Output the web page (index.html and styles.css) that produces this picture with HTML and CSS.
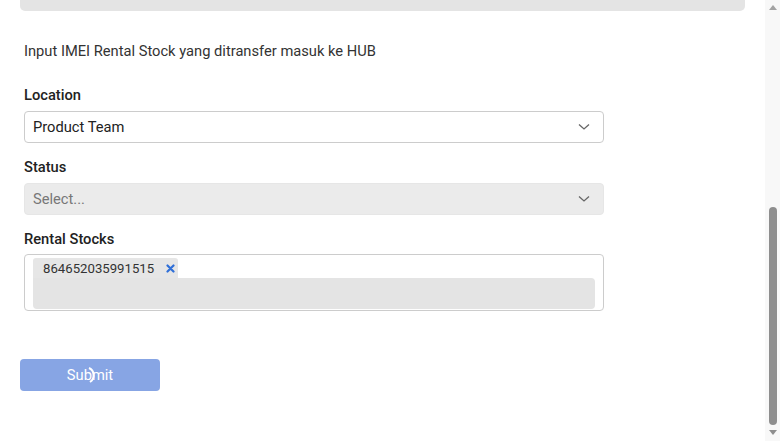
FILE: index.html
```html
<!DOCTYPE html>
<html>
<head>
<meta charset="utf-8">
<link rel="stylesheet" href="styles.css">
</head>
<body>
<div class="viewport">
  <div class="page">
    <div class="top-box"></div>
    <div class="form">
      <p class="intro">Input IMEI Rental Stock yang ditransfer masuk ke HUB</p>
      <div class="field">
        <label class="label">Location</label>
        <div class="select">
          <span class="value">Product Team</span>
          <svg class="chev" width="12" height="8" viewBox="0 0 12 8"><path d="M1 1.5 L6 6 L11 1.5" fill="none" stroke="#666" stroke-width="1.3"/></svg>
        </div>
      </div>
      <div class="field">
        <label class="label">Status</label>
        <div class="select disabled">
          <span class="placeholder">Select...</span>
          <svg class="chev" width="12" height="8" viewBox="0 0 12 8"><path d="M1 1.5 L6 6 L11 1.5" fill="none" stroke="#666" stroke-width="1.3"/></svg>
        </div>
      </div>
      <div class="field">
        <label class="label tight">Rental Stocks</label>
        <div class="multi">
          <div class="chip-row">
            <span class="chip">864652035991515 <svg class="x" width="9" height="9" viewBox="0 0 9 9"><path d="M1.5 1.5 L7.5 7.5 M7.5 1.5 L1.5 7.5" stroke="#2f6fd8" stroke-width="2.2" stroke-linecap="round"/></svg></span>
          </div>
          <div class="multi-input"></div>
        </div>
      </div>
      <button class="submit">Submit<svg class="spin" width="16" height="18" viewBox="0 0 16 18"><path d="M3 2 A8 8 0 0 1 4 16" fill="none" stroke="#fff" stroke-width="2"/></svg></button>
    </div>
  </div>
  <div class="scrollbar">
    <div class="arrow up"></div>
    <div class="track"><div class="thumb"></div></div>
    <div class="arrow down"></div>
  </div>
</div>
</body>
</html>
```

FILE: styles.css
```css
html, body {
  margin: 0;
  padding: 0;
  height: 100%;
  overflow: hidden;
  background: #fff;
  font-family: Roboto, "Liberation Sans", sans-serif;
  color: #333;
}
.viewport {
  display: flex;
  height: 441px;
}
.page {
  flex: 1;
  padding: 0 20px;
}
.top-box {
  height: 11px;
  background: #e4e4e4;
  border-radius: 0 0 5px 5px;
}
.form {
  padding: 0 0 0 4px;
}
.intro {
  margin: 32px 0 0;
  font-size: 14.7px;
  line-height: 17px;
}
.field {
  width: 580px;
}
.label {
  display: block;
  font-weight: 500;
  font-size: 14.7px;
  line-height: 16px;
  color: #222;
  margin-top: 27px;
  margin-bottom: 8px;
}
.field + .field .label {
  margin-top: 16px;
}
.label.tight { margin-bottom: 7px; }
.select {
  box-sizing: border-box;
  height: 32px;
  border: 1px solid #ccc;
  border-radius: 4px;
  display: flex;
  align-items: center;
  justify-content: space-between;
  padding: 0 13px 0 8px;
  font-size: 14.7px;
}
.select .value { color: #222; }
.select.disabled {
  background: #ebebeb;
  border-color: #e6e6e6;
}
.placeholder { color: #777; }
.multi {
  box-sizing: border-box;
  height: 57px;
  border: 1px solid #ccc;
  border-radius: 4px;
  padding: 3px 8px 0 8px;
}
.chip-row { display: flex; }
.chip {
  display: flex;
  align-items: center;
  height: 20px;
  padding: 0 3px 0 10px;
  background: #e6e6e6;
  border-radius: 3px 3px 0 0;
  font-size: 13.2px;
  color: #333;
  width: 132px;
  justify-content: space-between;
}
.multi-input {
  height: 31px;
  background: #e4e4e4;
  border-radius: 0 4px 4px 4px;
}
.submit {
  margin: 48px 0 0 -4px;
  width: 140px;
  height: 32px;
  border: none;
  border-radius: 4px;
  background: #87a5e4;
  color: #fff;
  font-family: Roboto, "Liberation Sans", sans-serif;
  font-size: 14.7px;
  position: relative;
}
.spin {
  position: absolute;
  left: 66px;
  top: 7px;
}
.scrollbar {
  width: 15px;
  background: #f8f8f8;
  display: flex;
  flex-direction: column;
  align-items: center;
}
.arrow {
  width: 0; height: 0;
  border-left: 4px solid transparent;
  border-right: 4px solid transparent;
}
.arrow.up { border-bottom: 5px solid #a3a3a3; margin-top: 5px; }
.arrow.down { border-top: 5px solid #8e8e8e; margin-bottom: 6px; }
.track {
  flex: 1;
  width: 100%;
  display: flex;
  flex-direction: column;
  justify-content: flex-end;
  align-items: center;
  padding-bottom: 5px;
}
.thumb {
  width: 8px;
  height: 218px;
  background: #8e8e8e;
  border-radius: 4px;
}
```
